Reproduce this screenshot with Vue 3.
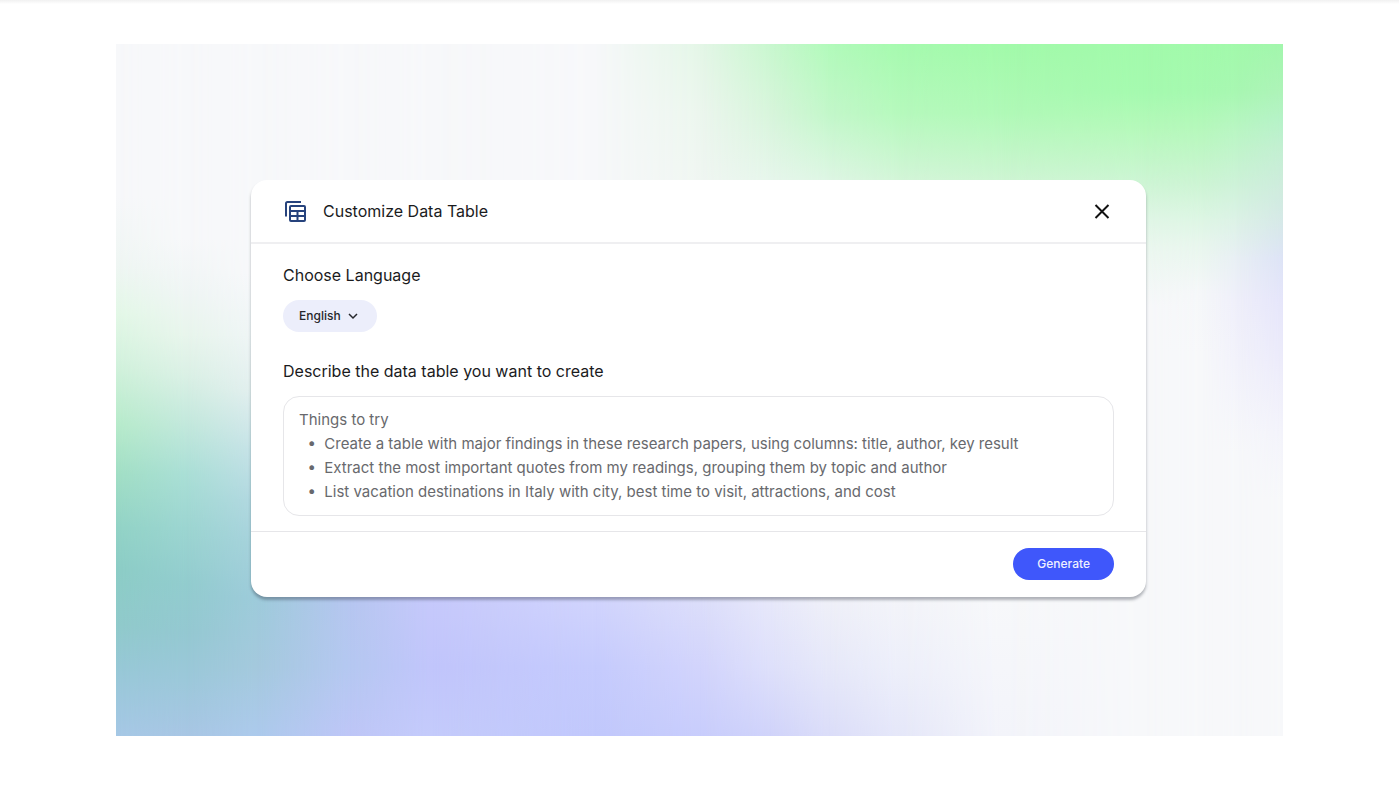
<script setup>
import { ref } from 'vue'

const language = ref('English')
const prompt = ref('')
const languages = ['English', 'Español', 'Français', 'Deutsch']
const hint = [
  'Things to try',
  '  •  Create a table with major findings in these research papers, using columns: title, author, key result',
  '  •  Extract the most important quotes from my readings, grouping them by topic and author',
  '  •  List vacation destinations in Italy with city, best time to visit, attractions, and cost',
].join('\n')

// Colour mesh: vertical colour ramps, each fading in from the ramp before it.
const mesh = [
  { x: 0, ramp: '#f7f8fa 22%, #eff6f3 32%, #e3f8e7 39%, #d3f2dd 46%, #b7ebcb 55%, #a2dfc5 62%, #92d3c6 70%, #8ccdc6 76%, #90cacb 84%, #97c8d6 90%, #a6c8e6' },
  { x: 6, ramp: '#f7f8fa 28%, #eff5f4 36%, #e8f5ec 42%, #daf0e5 48%, #c2e8dc 55%, #aadfd6 62%, #9cd5d1 70%, #92ccce 78%, #94c8d1 85%, #9cc8da 92%, #a8c6e4' },
  { x: 12, ramp: '#f7f8fa 33%, #eff5f6 42%, #e3efef 50%, #c8e3e8 58%, #b2d8e1 66%, #a6d2dc 72%, #9dcbda 80%, #a4c9dd 90%, #accaec' },
  { x: 20, ramp: '#f7f8fa 33%, #b6c6f0 80%, #b5c8f1 90%, #bec6f7' },
  { x: 27, ramp: '#f7f8fa 33%, #c6c9fb 80%, #c1c5fb 90%, #c4cbfb' },
  { x: 41, ramp: '#f7f8fa 33%, #d1d4fd 80%, #c5cbfd 90%, #c1c8fc' },
  { x: 50, ramp: '#e4f6e7, #ecf6ee 10%, #f0f6f2 20%, #f7f8fa 40%, #dcdefa 80%, #d2d4fc 90%, #c8cdfc' },
  { x: 56, ramp: '#c9f7cf, #d8f5dc 10%, #e7f6ec 20%, #f7f8fa 40%, #e7e8fa 80%, #dee0fb 90%, #d0d3fa' },
  { x: 61, ramp: '#b2fabb, #c3f7ca 10%, #dff6e5 20%, #f7f8fa 40%, #eff0f8 80%, #e6e8f9 90%, #dbddf9' },
  { x: 67, ramp: '#a6faaf, #b6f9bd 10%, #d4f5d9 20%, #f7f8fa 40%, #f3f4f9 80%, #edeffa 90%, #e5e7f9' },
  { x: 76, ramp: '#a2faaa, #b0f9b7 10%, #cff5d4 20%, #f7f8fa 40%, #f7f8fa 80%, #f5f6fa 90%, #f3f4fa' },
  { x: 88, ramp: '#a2faab, #a5faaf 7%, #b5f9ba 12%, #cdf5d4 20%, #dff6e5 25%, #ecf7f0 30%, #f7f8fa 38%' },
  { x: 93, ramp: '#a2faab, #a6f9b0 7%, #b5f8bb 12%, #ccf4d3 20%, #dcf6e3 25%, #e8f6ed 29%, #f5f7f9 36%, #f7f8fa 45%' },
  { x: 96, ramp: '#a2f9ab, #a8f7b2 7%, #b8f6c2 12%, #cdf2d8 20%, #dbf2e5 25%, #e8eff4 31%, #efeffa 37%, #f2f2fb 46%, #f7f8fa 59%' },
  { x: 100, ramp: '#a2f6ac, #aef3b9 7%, #b6f2c8 11%, #c3efd2 15%, #cdecdc 20%, #d5e9e6 25%, #dde3f6 31%, #e5e5fa 37%, #ecebfa 46%, #f3f3fb 56%, #f7f8fa 66%' },
]

const washes = mesh.map(({ x, ramp }, i) => ({
  background: `linear-gradient(${ramp} 100%)`,
  maskImage: i ? `linear-gradient(to right, transparent ${mesh[i - 1].x}%, #000 ${x}%)` : 'none',
}))
</script>

<template>
  <main class="page">
    <section class="stage">
      <div v-for="(wash, i) in washes" :key="i" class="wash" :style="wash" aria-hidden="true"></div>
      <form class="card" @submit.prevent>
        <header class="card-head">
          <svg class="table-icon" viewBox="0 0 24 24" aria-hidden="true">
            <path d="M3 17.500V4.500Q3 3 4.500 3H18" />
            <rect x="7" y="7" width="15" height="15" rx="1" />
            <path d="M7 12H22M7 17H22M14.500 12V22" />
          </svg>
          <h1>Customize Data Table</h1>
          <button class="close" type="button" aria-label="Close">
            <svg viewBox="0 0 24 24" aria-hidden="true"><path d="M5.500 6 18.500 19M18.500 6 5.500 19" /></svg>
          </button>
        </header>

        <div class="card-body">
          <label class="field-label" for="language">Choose Language</label>
          <div class="picker">
            <select id="language" v-model="language">
              <option v-for="name in languages" :key="name">{{ name }}</option>
            </select>
            <svg viewBox="0 0 12 12" aria-hidden="true"><path d="M2 4 6 8 10 4" /></svg>
          </div>
          <label class="field-label" for="prompt">Describe the data table you want to create</label>
          <textarea id="prompt" v-model="prompt" rows="4" :placeholder="hint"></textarea>
        </div>

        <footer class="card-foot">
          <button class="generate" type="submit">Generate</button>
        </footer>
      </form>
    </section>
  </main>
</template>

<style>
body {
  background: #fff;
}
</style>

<style scoped>
* {
  box-sizing: border-box;
}

.page {
  padding: 44px 116px 51px;
  background: linear-gradient(#f1f1f1, #fff 4px);
  font-family: Inter, "Liberation Sans", sans-serif;
  color: #1b1b1d;
}

.stage {
  position: relative;
  padding: 136px 137px 139px 135px;
  background: #f7f8fa;
}

.wash {
  position: absolute;
  inset: 0;
}

.card {
  position: relative;
  border-radius: 16px;
  background: #fff;
  box-shadow: 0 3px 3px rgba(40, 45, 60, 0.35);
}

.card-head {
  display: flex;
  align-items: center;
  height: 64px;
  padding: 0 32px;
  border-bottom: 2px solid #efeff1;
}

.table-icon {
  width: 24px;
  height: 24px;
  margin-right: 16px;
  fill: none;
  stroke: #27437d;
  stroke-width: 2;
}

h1 {
  flex: 1;
  margin: 0;
  font-size: 16px;
  line-height: 24px;
  font-weight: 400;
}

.close {
  display: grid;
  place-items: center;
  width: 24px;
  height: 24px;
  padding: 0;
  border: 0;
  background: none;
}

.close svg {
  width: 24px;
  height: 24px;
  stroke: #111;
  stroke-width: 2;
}

.card-body {
  display: flex;
  flex-direction: column;
  align-items: flex-start;
  padding: 19px 32px 15px;
}

.field-label {
  font-size: 16px;
  line-height: 24px;
}

.picker {
  display: grid;
  align-items: center;
  margin: 13px 0 27px;
}

.picker > * {
  grid-area: 1 / 1;
}

.picker select {
  width: 94px;
  height: 32px;
  padding: 0 16px;
  border: 0;
  border-radius: 16px;
  background: #eceefb;
  appearance: none;
  font: 500 12px/16px Inter, "Liberation Sans", sans-serif;
  color: #26272c;
}

.picker svg {
  justify-self: end;
  width: 12px;
  height: 12px;
  margin-right: 18px;
  fill: none;
  stroke: #26272c;
  stroke-width: 1.500;
  pointer-events: none;
}

textarea {
  width: 100%;
  height: 120px;
  margin-top: 13px;
  padding: 11px 15px;
  border: 1px solid #e6e6e9;
  border-radius: 16px;
  background: #fff;
  resize: none;
  overflow: hidden;
  font: 400 15px/24px Inter, "Liberation Sans", sans-serif;
  color: #1b1b1d;
}

textarea::placeholder {
  color: #68696d;
  opacity: 1;
}

.card-foot {
  display: flex;
  justify-content: flex-end;
  padding: 16px 32px 17px;
  border-top: 1px solid #e6e6e9;
}

.generate {
  height: 32px;
  padding: 0 24px;
  border: 0;
  border-radius: 16px;
  background: #3f57fb;
  font: 500 12px/16px Inter, "Liberation Sans", sans-serif;
  color: #eef0ff;
}
</style>
